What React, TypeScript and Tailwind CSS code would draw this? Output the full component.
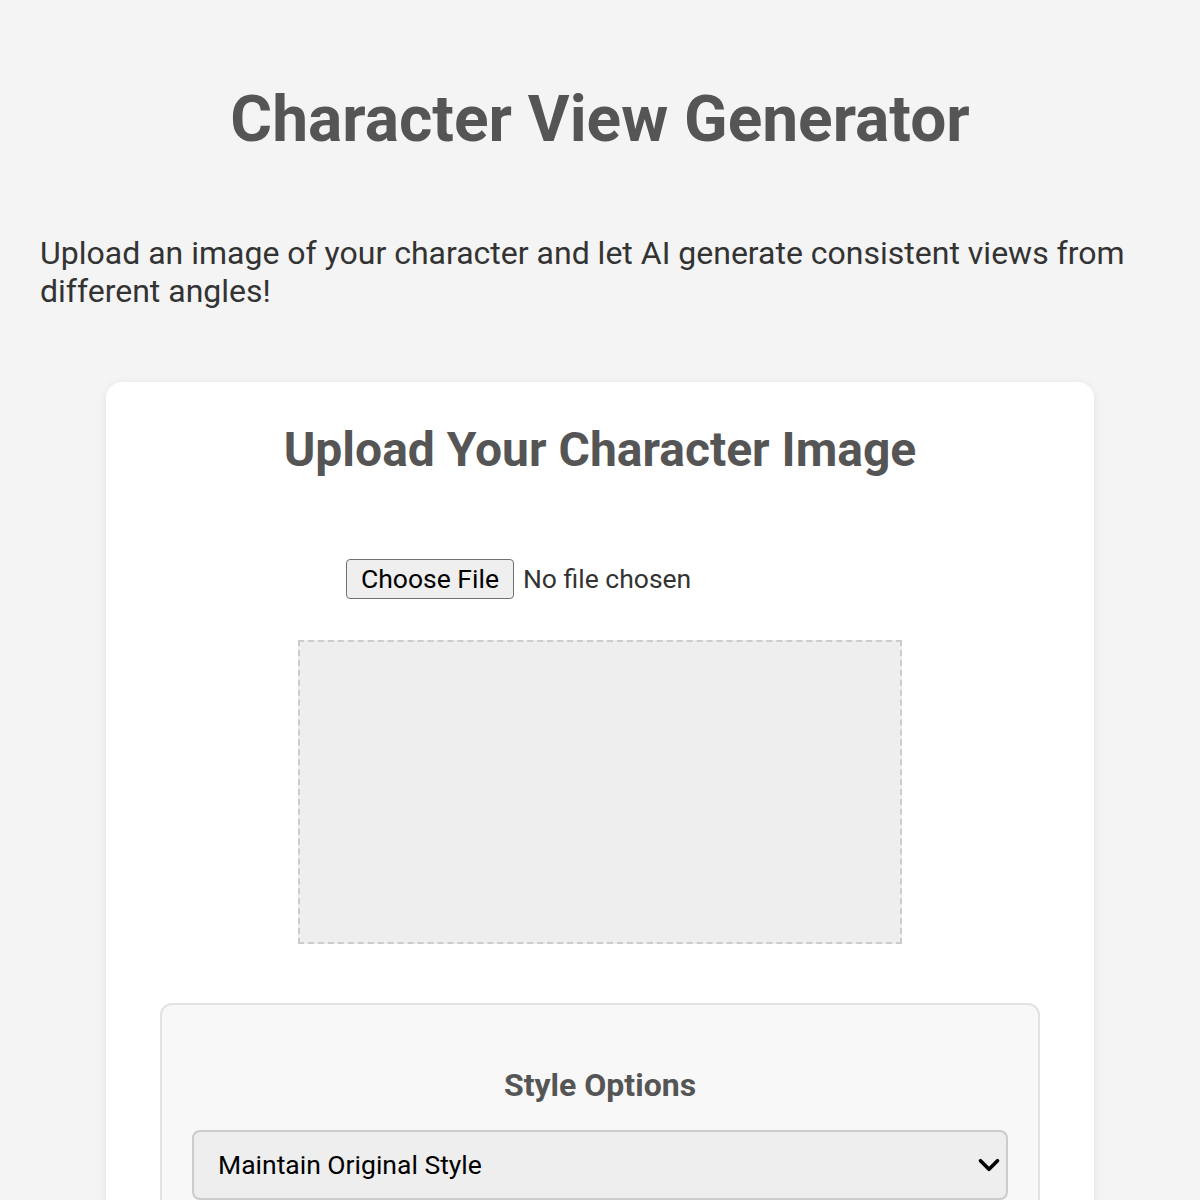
import { ChevronDown } from "lucide-react";

export default function App() {
  return (
    <div className="min-h-screen bg-[#f4f4f4] px-10 pb-10 font-['Roboto',sans-serif] text-[#333]">
      <h1 className="pt-[78px] text-center text-[64px] font-bold leading-[84px] text-[#555]">
        Character View Generator
      </h1>
      <p className="mt-[72px] text-[32px] leading-[38px] text-[#333]">
        Upload an image of your character and let AI generate consistent views from different angles!
      </p>

      <div className="mx-auto mt-[72px] w-[988px] rounded-2xl bg-white px-[54px] pt-[36px] pb-10 shadow-[0_2px_10px_rgba(0,0,0,0.08)]">
        <h2 className="text-center text-[48px] font-bold leading-[64px] text-[#555]">
          Upload Your Character Image
        </h2>

        <div className="mx-auto mt-[77px] flex w-[508px] items-center gap-[9px]">
          <button className="h-10 rounded border border-[#707070] bg-[#efefef] px-[14px] text-[26.5px] leading-none text-black">
            Choose File
          </button>
          <span className="text-[26.5px] text-[#333]">No file chosen</span>
        </div>

        <div className="mx-auto mt-[41px] h-[304px] w-[604px] border-2 border-dashed border-[#ccc] bg-[#eee]" />

        <div className="mt-[59px] rounded-xl border-2 border-[#e2e2e2] bg-[#f8f8f8] px-[30px] pt-[60px] pb-8">
          <h3 className="text-center text-[32px] font-bold leading-10 text-[#555]">Style Options</h3>
          <div className="mt-[25px] flex h-[70px] items-center justify-between rounded-lg border-2 border-[#ccc] bg-[#eee] pr-0 pl-[24px]">
            <span className="text-[26.5px] text-black">Maintain Original Style</span>
            <ChevronDown size={34} strokeWidth={2.6} className="text-black" />
          </div>
        </div>
      </div>
    </div>
  );
}
